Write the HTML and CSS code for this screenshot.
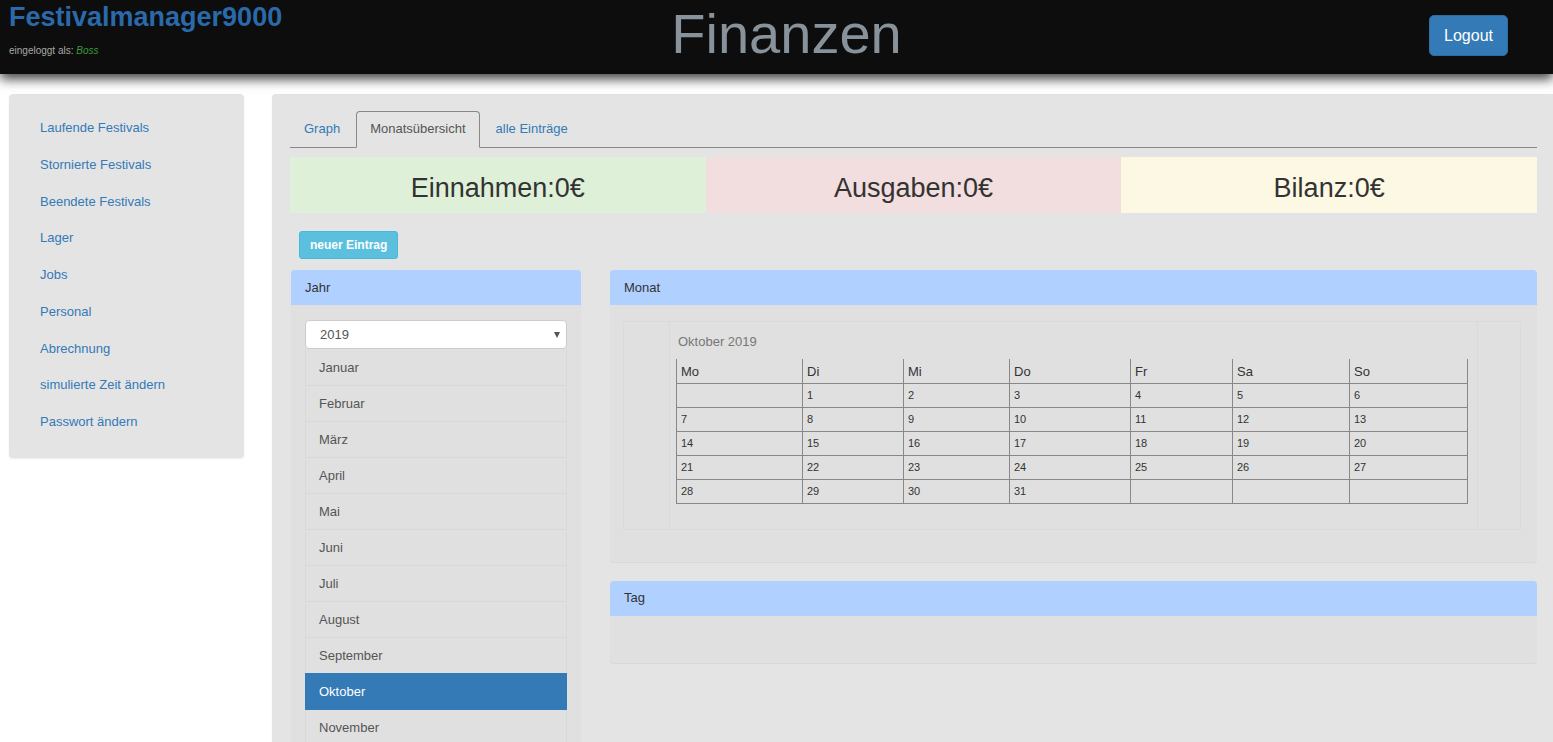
FILE: index.html
```html
<!DOCTYPE html>
<html lang="de">
<head>
<meta charset="utf-8">
<title>Finanzen</title>
<link rel="stylesheet" href="styles.css">
</head>
<body>
<header class="topbar">
  <div class="brand">
    <h1 class="brand-title">Festivalmanager9000</h1>
    <div class="brand-user">eingeloggt als: <em class="user-name">Boss</em></div>
  </div>
  <div class="page-title">Finanzen</div>
  <div class="top-actions">
    <button class="btn-logout">Logout</button>
  </div>
</header>

<div class="layout">
  <nav class="sidebar">
    <ul class="side-nav">
      <li><a href="#">Laufende Festivals</a></li>
      <li><a href="#">Stornierte Festivals</a></li>
      <li><a href="#">Beendete Festivals</a></li>
      <li><a href="#">Lager</a></li>
      <li><a href="#">Jobs</a></li>
      <li><a href="#">Personal</a></li>
      <li><a href="#">Abrechnung</a></li>
      <li><a href="#">simulierte Zeit ändern</a></li>
      <li><a href="#">Passwort ändern</a></li>
    </ul>
  </nav>

  <main class="main">
    <ul class="tabs">
      <li class="tab"><a href="#">Graph</a></li>
      <li class="tab active"><a href="#">Monatsübersicht</a></li>
      <li class="tab"><a href="#">alle Einträge</a></li>
    </ul>

    <div class="stats">
      <div class="stat stat-in">Einnahmen:0€</div>
      <div class="stat stat-out">Ausgaben:0€</div>
      <div class="stat stat-sum">Bilanz:0€</div>
    </div>

    <button class="btn-new">neuer Eintrag</button>

    <div class="columns">
      <section class="panel panel-year">
        <div class="panel-head">Jahr</div>
        <div class="panel-body year-body">
          <div class="select">2019<span class="caret"></span></div>
          <ul class="months">
            <li class="month">Januar</li>
            <li class="month">Februar</li>
            <li class="month">März</li>
            <li class="month">April</li>
            <li class="month">Mai</li>
            <li class="month">Juni</li>
            <li class="month">Juli</li>
            <li class="month">August</li>
            <li class="month">September</li>
            <li class="month active">Oktober</li>
            <li class="month">November</li>
            <li class="month">Dezember</li>
          </ul>
        </div>
      </section>

      <div class="right-col">
        <section class="panel">
          <div class="panel-head">Monat</div>
          <div class="panel-body month-body">
            <div class="cal-box">
              <div class="cal-side"></div>
              <div class="cal-center">
                <div class="cal-caption">Oktober 2019</div>
                <table class="cal">
                  <colgroup>
                    <col class="c-mo"><col class="c-di"><col class="c-mi"><col class="c-do"><col class="c-fr"><col class="c-sa"><col class="c-so">
                  </colgroup>
                  <thead>
                    <tr><th>Mo</th><th>Di</th><th>Mi</th><th>Do</th><th>Fr</th><th>Sa</th><th>So</th></tr>
                  </thead>
                  <tbody>
                    <tr><td></td><td>1</td><td>2</td><td>3</td><td>4</td><td>5</td><td>6</td></tr>
                    <tr><td>7</td><td>8</td><td>9</td><td>10</td><td>11</td><td>12</td><td>13</td></tr>
                    <tr><td>14</td><td>15</td><td>16</td><td>17</td><td>18</td><td>19</td><td>20</td></tr>
                    <tr><td>21</td><td>22</td><td>23</td><td>24</td><td>25</td><td>26</td><td>27</td></tr>
                    <tr><td>28</td><td>29</td><td>30</td><td>31</td><td></td><td></td><td></td></tr>
                  </tbody>
                </table>
              </div>
              <div class="cal-side"></div>
            </div>
          </div>
        </section>

        <section class="panel panel-day">
          <div class="panel-head">Tag</div>
          <div class="panel-body day-body"></div>
        </section>
      </div>
    </div>
  </main>
</div>
</body>
</html>
```

FILE: styles.css
```css
* { box-sizing: border-box; }

html, body {
  margin: 0;
  padding: 0;
}

body {
  background: #ffffff;
  font-family: "Liberation Sans", Arial, Helvetica, sans-serif;
  font-size: 13px;
  color: #333333;
}

ul { list-style: none; margin: 0; padding: 0; }
a { text-decoration: none; }

/* ---------- header ---------- */
.topbar {
  position: relative;
  z-index: 2;
  height: 74px;
  background: #0d0d0d;
  display: grid;
  grid-template-columns: 1fr auto 1fr;
  box-shadow: 0 5px 11px rgba(0, 0, 0, 0.75);
}

.brand {
  padding: 2px 0 0 9px;
}

.brand-title {
  margin: 0;
  font-size: 27px;
  line-height: 31px;
  font-weight: bold;
  color: #2a6aaa;
}

.brand-user {
  margin-top: 12px;
  font-size: 10px;
  line-height: 12px;
  color: #a8a8a8;
}

.user-name {
  color: #3d9a3d;
}

.page-title {
  padding: 6px 0 0 20px;
  font-size: 56px;
  line-height: 56px;
  color: #87929a;
}

.top-actions {
  display: flex;
  justify-content: flex-end;
  align-items: flex-start;
  padding: 15px 45px 0 0;
}

.btn-logout {
  font-family: inherit;
  font-size: 16px;
  line-height: 19px;
  padding: 10px 14px;
  color: #ffffff;
  background: #337ab7;
  border: 1px solid #2e6da4;
  border-radius: 5px;
}

/* ---------- layout ---------- */
.layout {
  display: flex;
  align-items: flex-start;
  gap: 28px;
  padding: 20px 0 0 9px;
}

.sidebar {
  flex: 0 0 235px;
  background: #e4e4e4;
  border-radius: 4px;
  box-shadow: 0 1px 2px rgba(0, 0, 0, 0.08);
  padding: 16px 0 17px 16px;
}

.side-nav a {
  display: block;
  padding: 10px 15px;
  line-height: 16.75px;
  color: #337ab7;
  font-size: 13px;
}

.main {
  flex: 1;
  min-height: 660px;
  background: #e4e4e4;
  border-radius: 4px 0 0 0;
  box-shadow: 0 1px 2px rgba(0, 0, 0, 0.06);
  padding: 17px 16px 0 18px;
}

/* ---------- tabs ---------- */
.tabs {
  display: flex;
  height: 37px;
  border-bottom: 1px solid #888888;
}

.tab {
  margin-right: 2px;
  margin-bottom: -1px;
}

.tab a {
  display: block;
  padding: 9px 13px 11px;
  line-height: 15px;
  font-size: 13px;
  color: #337ab7;
  border: 1px solid transparent;
  border-radius: 4px 4px 0 0;
}

.tab.active a {
  color: #555555;
  background: #e4e4e4;
  border-color: #888888;
  border-bottom-color: transparent;
}

/* ---------- stats ---------- */
.stats {
  display: grid;
  grid-template-columns: 1fr 1fr 1fr;
  margin-top: 9px;
}

.stat {
  height: 56px;
  display: flex;
  align-items: center;
  justify-content: center;
  padding-top: 7px;
  font-size: 27px;
  color: #333333;
}

.stat-in { background: #dff0d8; }
.stat-out { background: #f2dede; }
.stat-sum { background: #fcf8e3; }

.btn-new {
  display: block;
  margin: 18px 0 0 9px;
  height: 28px;
  padding: 0 10px;
  font-family: inherit;
  font-size: 12px;
  font-weight: bold;
  color: #ffffff;
  background: #5bc0de;
  border: 1px solid #46b8da;
  border-radius: 3px;
}

/* ---------- panels ---------- */
.columns {
  display: grid;
  grid-template-columns: 290px 927px;
  column-gap: 29px;
  margin: 11px 0 0 1px;
  align-items: start;
}

.panel {
  background: #e0e0e0;
  border-radius: 4px;
  box-shadow: 0 1px 1px rgba(0, 0, 0, 0.06);
}

.panel-head {
  height: 35px;
  display: flex;
  align-items: center;
  padding: 0 14px 1px;
  background: #b0d0ff;
  border-radius: 4px 4px 0 0;
  font-size: 13px;
  color: #333333;
}

.year-body {
  padding: 15px 14px 0 14px;
}

.select {
  position: relative;
  height: 29px;
  line-height: 27px;
  padding-left: 14px;
  background: #ffffff;
  border: 1px solid #cccccc;
  border-radius: 4px;
  font-size: 13px;
  color: #555555;
}

.caret {
  position: absolute;
  right: 6px;
  top: 11px;
  width: 0;
  height: 0;
  border-left: 3.5px solid transparent;
  border-right: 3.5px solid transparent;
  border-top: 6px solid #555555;
}

.month {
  height: 37px;
  line-height: 35px;
  padding-left: 13px;
  margin-bottom: -1px;
  border: 1px solid #d8d8d8;
  font-size: 13px;
  color: #555555;
  background: #e0e0e0;
}

.month:first-child { border-top-color: transparent; }

.month.active {
  position: relative;
  color: #ffffff;
  background: #337ab7;
  border-color: #337ab7;
}

.right-col {
  display: flex;
  flex-direction: column;
  gap: 19px;
}

.month-body {
  padding: 16px 16px 32px 13px;
}

.cal-box {
  display: grid;
  grid-template-columns: 45px 809px 1fr;
  border: 1px solid #dadada;
}

.cal-side + .cal-center {
  border-left: 1px solid #dadada;
}

.cal-center {
  border-right: 1px solid #dadada;
  padding: 12px 0 25px 6px;
}

.cal-caption {
  padding-left: 2px;
  line-height: 16px;
  font-size: 13px;
  color: #777777;
  margin-bottom: 9px;
}

.cal {
  border-collapse: collapse;
  table-layout: fixed;
  width: 791px;
}

.c-mo { width: 126px; }
.c-di { width: 101px; }
.c-mi { width: 106px; }
.c-do { width: 121px; }
.c-fr { width: 102px; }
.c-sa { width: 117px; }
.c-so { width: 118px; }

.cal tr { height: 24px; }

.cal th,
.cal td {
  border: 1px solid #888888;
  padding: 0 4px;
  text-align: left;
  vertical-align: middle;
  color: #333333;
}

.cal th {
  border-top: none;
  font-weight: normal;
  font-size: 13px;
  padding-top: 1px;
}

.cal td {
  font-size: 11px;
}

.day-body {
  height: 47px;
}
```
